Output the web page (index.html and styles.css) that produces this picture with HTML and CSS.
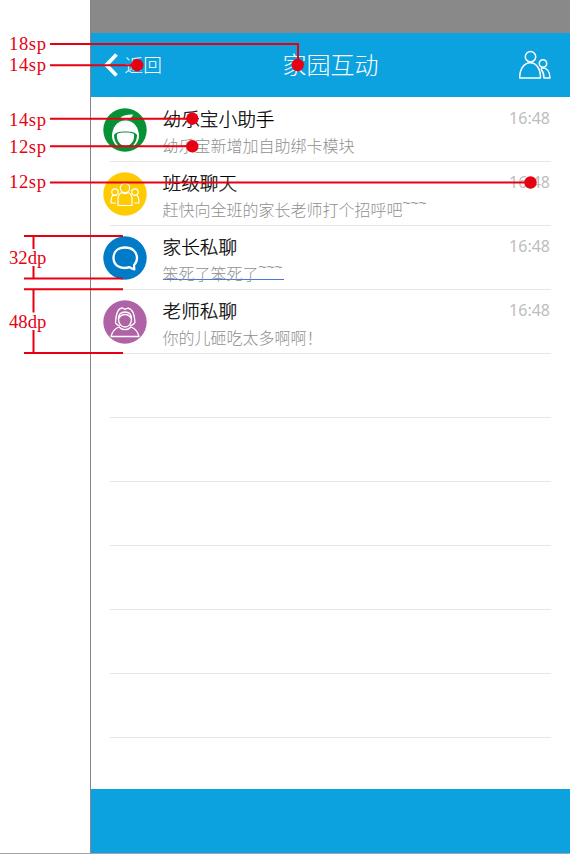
FILE: index.html
```html
<!DOCTYPE html>
<html lang="zh-CN">
<head>
<meta charset="utf-8">
<title>家园互动</title>
<link rel="stylesheet" href="styles.css">
</head>
<body>
<main class="phone">
  <div class="status"></div>
  <header class="header">
    <div class="back">
      <svg width="15" height="24" viewBox="0 0 15 24"><path d="M12.500 1.500 2.500 12l10 10.500" fill="none" stroke="#fff" stroke-width="3.800"/></svg>
      <span>返回</span>
    </div>
    <h1>家园互动</h1>
    <svg class="contacts" width="34" height="30" viewBox="0 0 34 30" fill="none" stroke="#fff" stroke-width="1.500" stroke-linejoin="round">
      <circle cx="12.500" cy="6.700" r="5.200"/><path d="M1.700 28C1.700 19 6 12.800 12.300 12.800S22.500 19 22.500 28Z"/>
      <circle cx="25" cy="13.500" r="3.700"/><path d="M23.800 17.800c5 0 8.200 4 8.200 10.200h-6c0-4-1-6.500-2.800-8.500Z"/>
    </svg>
  </header>
  <section class="list">
    <article class="row">
      <svg class="avatar" viewBox="0 0 44 44"><circle cx="22" cy="22" r="21.700" fill="#059234"/><path d="M17 10.500c2-3 6-4 13-4-1 3.500-4 5-7.500 5Z" fill="#fff"/><path d="M22.500 12.500C31 12.500 36 20 36 28c0 4-2 7.500-5 10H14c-3-2.500-5-6-5-10 0-8 5-15.500 13.500-15.500Z" fill="#fff"/><path d="M11 27c2-3 6-3.500 11.500-3.500S32 24 34 27c0 4-1.500 8-4.500 11h-14C12.500 35 11 31 11 27Z" fill="#059234"/><path d="M14 26c2-1.200 5-1.500 8.500-1.500s6 .3 8.500 1.500c.5 5-1 8-4 10.500-2 1.500-7 1.500-9 0-3-2.500-4.500-5.500-4-10.500Z" fill="#fff"/></svg>
      <div class="message"><h2>幼乐宝小助手</h2><p>幼乐宝新增加自助绑卡模块</p></div><time>16:48</time>
    </article>
    <article class="row">
      <svg class="avatar" viewBox="0 0 44 44" fill="none" stroke="#fff" stroke-width="1.200"><circle cx="22" cy="22" r="21.700" fill="#fdcb00" stroke="none"/><circle cx="22" cy="16" r="4.700"/><path d="M19 20.500c-3 1-4 3-4 7V33.500h14v-6c0-4-1-6-4-7-1.700 1.300-4.300 1.300-6 0Z"/><circle cx="12" cy="20" r="3.200"/><circle cx="32" cy="20" r="3.200"/><path d="M13.500 23.500H10c-1.500 1-2 3-2 7.500h5M30.500 23.500H34c1.500 1 2 3 2 7.500h-5"/></svg>
      <div class="message"><h2>班级聊天</h2><p>赶快向全班的家长老师打个招呼吧<span class="tilde">~~~</span></p></div><time>16:48</time>
    </article>
    <article class="row">
      <svg class="avatar" viewBox="0 0 44 44"><circle cx="22" cy="22" r="21.700" fill="#007bc8"/><path d="M26.500 31.200c-8 2.500-16-1.200-16-9.200C10.500 15 15.500 11.500 22 11.500S34 15 34 22c0 3-1 5.200-3 7 0 1.500 0 2.500.3 4.300-1.800-.2-3.500-1-4.800-2.100Z" fill="none" stroke="#fff" stroke-width="2.300" stroke-linejoin="round"/></svg>
      <div class="message"><h2>家长私聊</h2><p class="linked">笨死了笨死了<span class="tilde">~~~</span></p></div><time>16:48</time>
    </article>
    <article class="row">
      <svg class="avatar" viewBox="0 0 44 44" fill="none" stroke="#fff" stroke-width="1.300" stroke-linejoin="round"><circle cx="22" cy="22" r="21.700" fill="#b062a6" stroke="none"/><path d="M17 26c-3-1-4.500-2-4.500-4 .5-8 2-14 7-14l2.500 1.300L25 8c5 1 6.500 7 7 14-.5 2-2 3-5 4"/><path d="M15.500 19c0-4 2-7 6.500-7s6.500 3 6.500 7c0 5-3 8-6.500 8s-6.500-3-6.500-8Zm0 0c1-2 3-4.500 6.500-4.500s5.500 2.500 6.500 4.500"/><path d="M16 27c-4 1.500-7 5-8 9.500h28c-1-4.500-4-8-8-9.500-3 3.500-9 3.500-12 0Z"/></svg>
      <div class="message"><h2>老师私聊</h2><p>你的儿砸吃太多啊啊！</p></div><time>16:48</time>
    </article>
    <div class="row"></div><div class="row"></div><div class="row"></div><div class="row"></div><div class="row"></div><div class="row"></div>
  </section>
  <footer class="footer"></footer>
</main>
<div class="notes">
  <svg width="570" height="854" viewBox="0 0 570 854">
    <g fill="none" stroke="#e60012" stroke-width="2">
      <path d="M50 44H298V65M50 65.200H137M50 118.700H192M50 146.200H192M50 182.500H530"/>
      <path d="M24 236H123M24 278.600H123M24 289.200H123M24 353H123M33.500 236V249M33.500 266V279M33.500 289V312.500M33.500 330V353"/>
    </g>
    <g fill="#e60012"><circle cx="297.700" cy="65" r="6.200"/><circle cx="137.200" cy="65.200" r="6.200"/><circle cx="192.300" cy="118.700" r="6.200"/><circle cx="192.300" cy="146.300" r="6.200"/><circle cx="530.500" cy="182.500" r="6.200"/></g>
    <g class="labels"><text x="9" y="49.500">18sp</text><text x="9" y="70.500">14sp</text><text x="9" y="125.500">14sp</text><text x="9" y="152.500">12sp</text><text x="9" y="187.500">12sp</text><text class="dp" x="9" y="263.500">32dp</text><text class="dp" x="9" y="327.500">48dp</text></g>
  </svg>
</div>
</body>
</html>
```
FILE: styles.css
```css
* { box-sizing: border-box; }
body {
  margin: 0;
  height: 854px;
  position: relative;
  overflow: hidden;
  background: #fff;
  border-bottom: 1px solid #a5a5a5;
  font-family: "Noto Sans", "Noto Sans CJK SC", sans-serif;
}
h1, h2, p { margin: 0; font-weight: 300; white-space: nowrap; }
.phone {
  margin-left: 90px;
  height: 854px;
  border-left: 1px solid #858585;
  display: flex;
  flex-direction: column;
}
.status { height: 33px; background: #898989; }
.header {
  height: 64px;
  background: #0ba2df;
  color: #fff;
  display: grid;
  grid-template-columns: 191.500px 1fr 52px;
  align-items: center;
}
.back {
  display: flex;
  align-items: center;
  gap: 6px;
  padding-left: 12.500px;
}
.back span { font: 300 18.670px/26px "Noto Sans CJK SC", sans-serif; margin-top: -2px; }
h1 { font: 300 24px/36px "Noto Sans CJK SC", sans-serif; margin-top: -3px; }
.contacts { display: block; }
.list { height: 692px; }
.row {
  height: 64px;
  margin-right: 19px;
  padding-left: 12px;
  display: grid;
  grid-template-columns: 59.500px 1fr auto;
  background: linear-gradient(#e6e6e6, #e6e6e6) 19px 100% / 100% 1px no-repeat;
}
.row:first-child { height: 65px; padding-top: 1px; }
.avatar { width: 44px; height: 44px; margin-top: 9.500px; }
.message { padding-top: 7px; }
h2 { font: 300 18.670px/26px "Noto Sans CJK SC", sans-serif; color: #000; -webkit-text-stroke: .25px #000; }
p { font: 300 16px/24px "Noto Sans CJK SC", sans-serif; color: #8f8f8f; margin-top: 2px; }
.tilde {
  display: inline-block;
  font-family: "Liberation Sans", sans-serif;
  font-size: 13.700px;
  line-height: 12px;
  transform: translateY(-9px);
}
.linked {
  width: 121px;
  height: 19px;
  border-bottom: 1px solid #447bd4;
}
time { font-size: 16px; line-height: 22px; margin: 9px 1px 0 0; color: #bdbdbd; }
.footer { flex: 1; background: #0ba2df; border-bottom: 1px solid #858585; }
.notes { position: absolute; left: 0; top: 0; }
.notes svg { display: block; }
.labels { font: 18.670px "Liberation Serif", serif; fill: #e60012; letter-spacing: .6px; }
.dp { letter-spacing: 0; }
```
